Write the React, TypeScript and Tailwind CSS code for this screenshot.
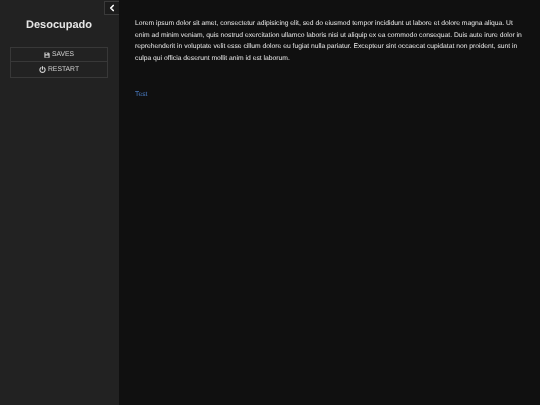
import { ChevronLeft } from "lucide-react";

function SaveIcon() {
  return (
    <svg width="6" height="6" viewBox="0 0 16 16" fill="currentColor" aria-hidden="true">
      <path fillRule="evenodd" d="M1 1h11l3 3v11H1V1zm3 1v4h7V2H4zm0 7v5h8V9H4z" />
      <rect x="8" y="2.5" width="2" height="3" />
    </svg>
  );
}

function PowerIcon() {
  return (
    <svg width="7" height="7" viewBox="0 0 16 16" fill="none" stroke="currentColor" strokeWidth="2.6" strokeLinecap="round" aria-hidden="true">
      <path d="M8 1.5v6" />
      <path d="M4.4 3.8a6 6 0 1 0 7.2 0" />
    </svg>
  );
}

function SideButton({ icon, label, last }: { icon: React.ReactNode; label: string; last?: boolean }) {
  return (
    <div className={`flex items-center justify-center gap-[2px] text-[6.8px] leading-[8px] text-[#d0d0d0] ${last ? "h-[15px]" : "h-[14px] border-b border-[#383838]"}`}>
      {icon}
      <span>{label}</span>
    </div>
  );
}

export default function App() {
  return (
    <div className="flex h-[405px] w-[540px] overflow-hidden bg-[#101010] font-['Liberation_Sans',Arial,sans-serif] [text-rendering:geometricPrecision]">
      <aside className="relative h-full w-[119px] shrink-0 bg-[#222222] pl-[10px] pr-[11px]">
        <button className="absolute right-0 top-[1px] flex h-[14px] w-[15px] items-center justify-center border border-[#3a3a3a] border-r-0 bg-[#1c1c1c] text-white">
          <ChevronLeft size={10} strokeWidth={4} />
        </button>
        <h1 className="pt-[18px] text-center text-[11px] font-bold leading-[14px] text-[#e6e6e6] blur-[0.25px]">Desocupado</h1>
        <div className="mt-[15px] border border-[#383838] blur-[0.2px]">
          <SideButton icon={<SaveIcon />} label="SAVES" />
          <SideButton icon={<PowerIcon />} label="RESTART" last />
        </div>
      </aside>
      <main className="flex-1 pl-[16px] pr-[14px] pt-[18px]">
        <p className="text-[6.75px] leading-[11.7px] text-[#e8e8e8] blur-[0.25px]">
          Lorem ipsum dolor sit amet, consectetur adipisicing elit, sed do eiusmod tempor incididunt ut labore et dolore magna aliqua. Ut enim ad minim veniam, quis nostrud exercitation ullamco laboris nisi ut aliquip ex ea commodo consequat. Duis aute irure dolor in reprehenderit in voluptate velit esse cillum dolore eu fugiat nulla pariatur. Excepteur sint occaecat cupidatat non proident, sunt in culpa qui officia deserunt mollit anim id est laborum.
        </p>
        <a className="mt-[24px] block text-[6.75px] leading-[11.7px] text-[#4a7cc4] blur-[0.25px]">Test</a>
      </main>
    </div>
  );
}
